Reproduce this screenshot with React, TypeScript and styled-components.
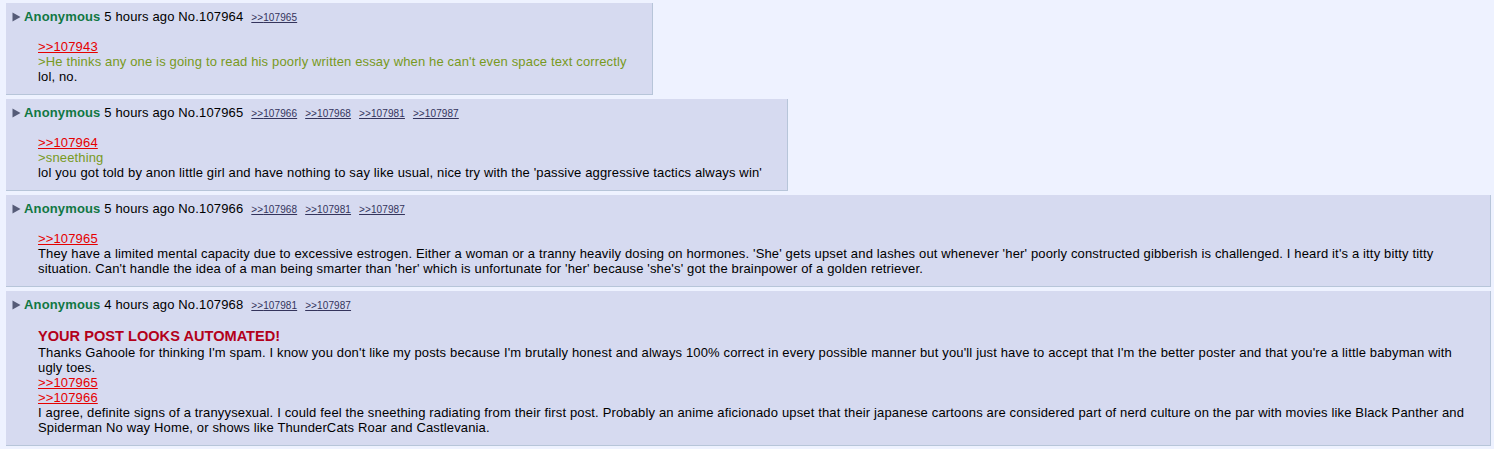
import React from "react";
import styled, { createGlobalStyle } from "styled-components";

const GlobalStyle = createGlobalStyle`
  html, body {
    margin: 0;
    padding: 0;
    background: #eef2ff;
  }
  body {
    font-family: "Liberation Sans", Arial, sans-serif;
    font-size: 13px;
    line-height: 15px;
    letter-spacing: 0.15px;
    color: #000;
  }
`;

const Thread = styled.div`
  display: flex;
  flex-direction: column;
  align-items: flex-start;
  gap: 4px;
  padding: 3px 3px 0 6px;
`;

const Post = styled.div`
  box-sizing: border-box;
  width: fit-content;
  max-width: 100%;
  background: #d6daf0;
  border-right: 1px solid #b7c5d9;
  border-bottom: 1px solid #b7c5d9;
  padding: 6px 0 10px 0;
`;

const Header = styled.div`
  padding-left: 6px;
  white-space: nowrap;
`;

const Arrow = styled.svg`
  display: inline-block;
  width: 9px;
  height: 10px;
  margin-right: 3px;
  vertical-align: -1px;
`;

const Name = styled.span`
  color: #117743;
  font-weight: bold;
`;

const Backlink = styled.a`
  font-size: 10px;
  letter-spacing: 0.1px;
  color: #34345c;
  text-decoration: underline;
  margin-left: 8px;
`;

const Body = styled.div`
  margin: 14px 25px 0 32px;
`;

const QuoteLink = styled.a`
  display: block;
  width: fit-content;
  color: #e50000;
  text-decoration: underline;
`;

const Green = styled.div`
  color: #789922;
`;

const Line = styled.div``;

const Warning = styled.div`
  color: #b3001b;
  font-weight: bold;
  font-size: 14.6px;
  line-height: 18px;
  letter-spacing: 0;
`;

type P = {
  time: string;
  no: string;
  backlinks: string[];
  children: React.ReactNode;
};

const PostBox = ({ time, no, backlinks, children }: P) => (
  <Post>
    <Header>
      <Arrow viewBox="0 0 9 10">
        <path d="M0.5 0.5 L8.5 5 L0.5 9.5 Z" fill="#555b77" />
      </Arrow>
      <Name>Anonymous</Name> {time} No.{no}
      {backlinks.map((b) => (
        <Backlink key={b}>&gt;&gt;{b}</Backlink>
      ))}
    </Header>
    <Body>{children}</Body>
  </Post>
);

export default function App() {
  return (
    <>
      <GlobalStyle />
      <Thread>
        <PostBox time="5 hours ago" no="107964" backlinks={["107965"]}>
          <QuoteLink>&gt;&gt;107943</QuoteLink>
          <Green>
            &gt;He thinks any one is going to read his poorly written essay when he can't even space text correctly
          </Green>
          <Line>lol, no.</Line>
        </PostBox>
        <PostBox
          time="5 hours ago"
          no="107965"
          backlinks={["107966", "107968", "107981", "107987"]}
        >
          <QuoteLink>&gt;&gt;107964</QuoteLink>
          <Green>&gt;sneething</Green>
          <Line>
            lol you got told by anon little girl and have nothing to say like usual, nice try with the 'passive aggressive tactics always win'
          </Line>
        </PostBox>
        <PostBox
          time="5 hours ago"
          no="107966"
          backlinks={["107968", "107981", "107987"]}
        >
          <QuoteLink>&gt;&gt;107965</QuoteLink>
          <Line>
            They have a limited mental capacity due to excessive estrogen. Either a woman or a tranny heavily dosing on hormones. 'She' gets upset and lashes out whenever 'her' poorly constructed gibberish is challenged. I heard it's a itty bitty titty situation. Can't handle the idea of a man being smarter than 'her' which is unfortunate for 'her' because 'she's' got the brainpower of a golden retriever.
          </Line>
        </PostBox>
        <PostBox time="4 hours ago" no="107968" backlinks={["107981", "107987"]}>
          <Warning>YOUR POST LOOKS AUTOMATED!</Warning>
          <Line>
            Thanks Gahoole for thinking I'm spam. I know you don't like my posts because I'm brutally honest and always 100% correct in every possible manner but you'll just have to accept that I'm the better poster and that you're a little babyman with ugly toes.
          </Line>
          <QuoteLink>&gt;&gt;107965</QuoteLink>
          <QuoteLink>&gt;&gt;107966</QuoteLink>
          <Line>
            I agree, definite signs of a tranyysexual. I could feel the sneething radiating from their first post. Probably an anime aficionado upset that their japanese cartoons are considered part of nerd culture on the par with movies like Black Panther and Spiderman No way Home, or shows like ThunderCats Roar and Castlevania.
          </Line>
        </PostBox>
      </Thread>
    </>
  );
}
